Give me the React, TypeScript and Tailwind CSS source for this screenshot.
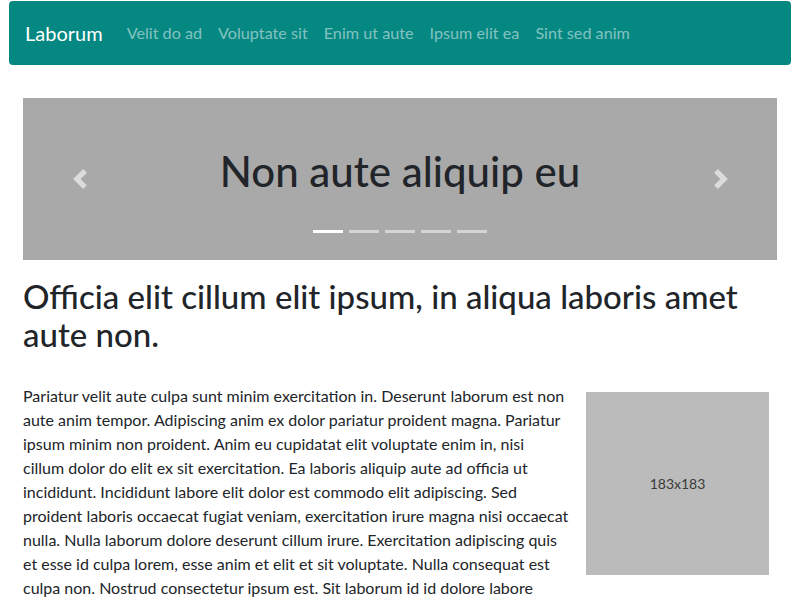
import React from 'react';

const links = ['Velit do ad', 'Voluptate sit', 'Enim ut aute', 'Ipsum elit ea', 'Sint sed anim'];

// line breaks follow the original page's wrapping
const lines = [
  'Pariatur velit aute culpa sunt minim exercitation in. Deserunt laborum est non',
  'aute anim tempor. Adipiscing anim ex dolor pariatur proident magna. Pariatur',
  'ipsum minim non proident. Anim eu cupidatat elit voluptate enim in, nisi',
  'cillum dolor do elit ex sit exercitation. Ea laboris aliquip aute ad officia ut',
  'incididunt. Incididunt labore elit dolor est commodo elit adipiscing. Sed',
  'proident laboris occaecat fugiat veniam, exercitation irure magna nisi occaecat',
  'nulla. Nulla laborum dolore deserunt cillum irure. Exercitation adipiscing quis',
  'et esse id culpa lorem, esse anim et elit et sit voluptate. Nulla consequat est',
  'culpa non. Nostrud consectetur ipsum est. Sit laborum id id dolore labore',
  'consequat, ipsum esse sunt ad officia. Magna elit nisi velit ut quis.',
];

const Chevron: React.FC<{ dir: 'left' | 'right' }> = ({ dir }) => (
  <svg width="20" height="20" viewBox="0 0 8 8" className="text-[#dcdcdc]" fill="currentColor">
    {dir === 'left' ? (
      <path d="M5.25 0l-4 4 4 4 1.5-1.5L4.25 4l2.5-2.5L5.25 0z" />
    ) : (
      <path d="M2.75 0l-1.5 1.5L3.75 4l-2.5 2.5L2.75 8l4-4-4-4z" />
    )}
  </svg>
);

const App: React.FC = () => {
  return (
    <div className="min-h-[600px] bg-white text-[#212529] font-['Lato',sans-serif]">
      <div className="px-[9px] pt-[1px]">
        <nav className="h-16 rounded bg-[#058782] flex items-center px-4">
          <span className="text-white text-[20px] mr-4">Laborum</span>
          <ul className="flex items-center">
            {links.map((l) => (
              <li key={l} className="px-2 text-[16.2px] text-white/50">
                {l}
              </li>
            ))}
          </ul>
        </nav>
      </div>

      <main className="px-[23px]">
        <div className="relative mt-[33px] h-[162px] bg-[#a9a9a9] flex items-center justify-center">
          <h1 className="text-[42px] font-medium leading-tight -mt-[16px]">Non aute aliquip eu</h1>
          <div className="absolute inset-y-0 left-0 w-[113px] flex items-center justify-center">
            <Chevron dir="left" />
          </div>
          <div className="absolute inset-y-0 right-0 w-[113px] flex items-center justify-center">
            <Chevron dir="right" />
          </div>
          <div className="absolute bottom-[27px] inset-x-0 flex justify-center gap-[6px]">
            <span className="w-[30px] h-[3px] bg-white" />
            <span className="w-[30px] h-[3px] bg-white/50" />
            <span className="w-[30px] h-[3px] bg-white/50" />
            <span className="w-[30px] h-[3px] bg-white/50" />
            <span className="w-[30px] h-[3px] bg-white/50" />
          </div>
        </div>

        <h2 className="mt-[17px] text-[33px] font-medium leading-[38px]">
          Officia elit cillum elit ipsum, in aliqua laboris amet aute non.
        </h2>

        <div className="mt-[31px] flex items-start">
          <p className="flex-1 text-[16px] leading-6">
            {lines.map((l, i) => (
              <React.Fragment key={i}>
                {l}
                {i < lines.length - 1 && <br />}
              </React.Fragment>
            ))}
          </p>
          <div className="ml-[9px] mr-[8px] mt-[8px] w-[183px] h-[183px] shrink-0 bg-[#bbbbbb] flex items-center justify-center text-[14px] text-[#3a3a3a]">
            183x183
          </div>
        </div>
      </main>
    </div>
  );
};

export default App;
